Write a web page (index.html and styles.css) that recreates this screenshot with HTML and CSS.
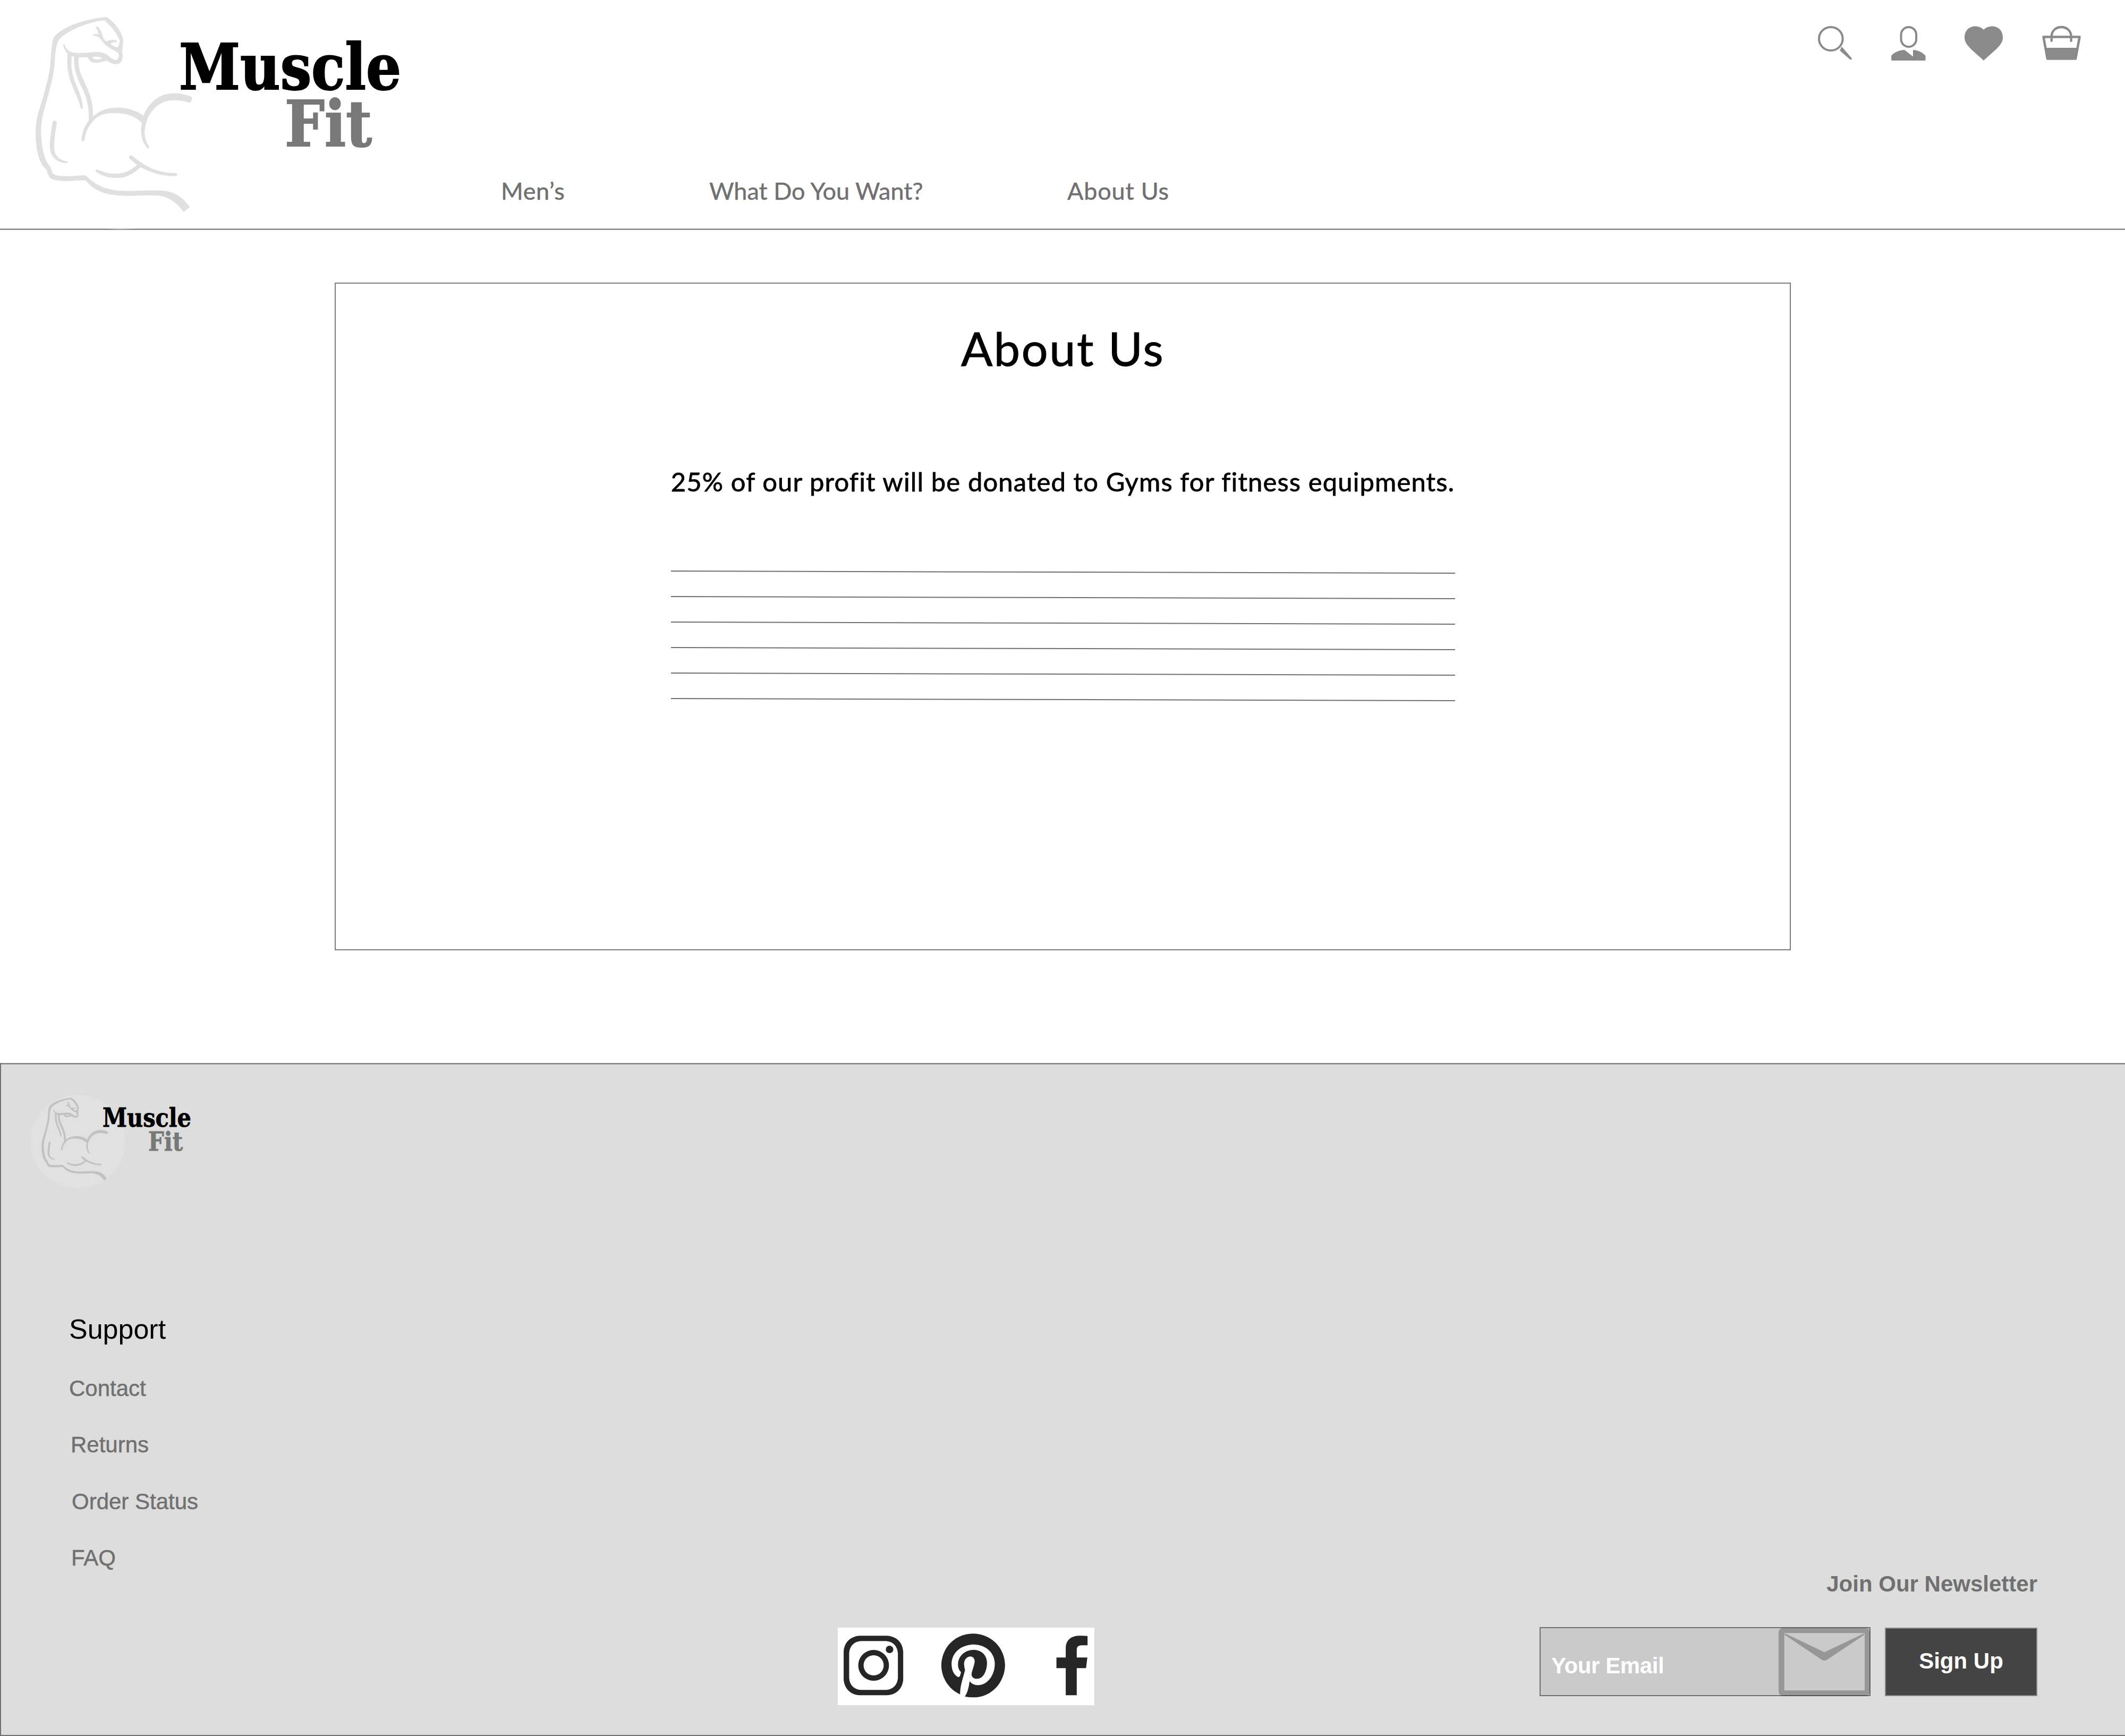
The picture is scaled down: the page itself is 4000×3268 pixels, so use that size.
FILE: index.html
```html
<!DOCTYPE html>
<html lang="en">
<head>
<meta charset="utf-8">
<title>Muscle Fit – About Us</title>
<link rel="stylesheet" href="styles.css">
</head>
<body>
<svg class="sprite" aria-hidden="true">
  <symbol id="arm" viewBox="0 0 1020 1170" overflow="visible">
    <!-- outer forearm, elbow and underside -->
    <path d="M445 36 C360 45 250 72 180 125 Q152 144 148 168 C136 225 138 290 130 335 C115 430 75 540 58 610 C48 670 48 740 62 800 C72 850 92 880 114 902 Q120 925 130 942 C150 962 200 962 240 962 C275 962 305 956 335 960 C385 1018 440 1046 580 1046 C640 1046 690 1040 750 1045 C820 1060 850 1090 887 1137 L922 1110 C880 1050 830 1020 770 1017 C700 1010 640 1020 560 1018 C470 1018 400 995 343 938 Q335 929 322 930 C280 932 250 937 200 934 C160 932 145 924 141 900 Q138 882 126 872 C100 838 86 780 82 690 C80 640 90 590 108 530 C130 450 150 380 158 310 C162 250 162 210 180 170 C205 130 320 68 440 55 C480 90 510 130 526 168 Q524 195 514 208 C490 202 470 190 478 183 Q495 176 508 178 Q514 172 508 168 C480 163 465 167 450 174 C436 162 430 152 428 135 C420 115 412 98 400 89 Q392 88 391 95 Q402 110 406 134 Q390 130 377 133 Q370 137 377 141 C405 144 415 155 428 174 C450 205 490 222 515 237 C526 250 522 270 508 279 C490 280 475 265 455 250 C430 232 400 232 380 234 C340 238 290 244 250 233 C230 225 222 210 215 193 Q208 186 207 196 C212 216 220 232 231 243 C228 310 232 350 246 392 C265 450 295 495 305 550 Q311 560 318 550 C318 510 300 465 280 420 C258 370 248 310 255 257 L269 260 C265 320 280 370 310 430 C340 490 356 550 350 623 C328 650 312 690 310 732 Q318 744 327 733 C331 690 350 650 380 620 C420 575 480 575 545 582 C590 588 620 606 652 634 C642 680 644 730 680 774 Q689 783 694 770 C664 730 658 680 680 617 C710 550 760 500 850 507 Q890 508 920 521 Q934 514 935 492 Q930 484 922 483 C840 453 765 464 715 512 C685 540 670 565 660 593 C610 557 550 545 500 548 C445 550 410 568 375 597 C378 520 352 455 325 400 C302 350 290 320 294 264 L346 263 C352 285 370 298 405 294 Q435 288 452 281 C470 295 500 310 525 298 C542 285 548 255 539 232 Q545 200 546 165 C540 120 500 70 460 41 Q452 35 445 36 Z M370 263 Q395 256 427 266 C410 280 380 280 370 263 Z"/>
    <!-- elbow crease -->
    <path d="M147 632 Q148 622 159 622 Q171 624 171 634 C160 700 150 770 160 800 C172 835 200 846 228 852 Q234 857 228 861 C190 862 155 845 139 808 C122 765 138 690 147 632 Z"/>
    <!-- armpit lines -->
    <path d="M579 832 Q577 818 592 818 Q599 820 603 824 C670 880 740 917 844 917 Q852 920 852 927 Q850 934 842 934 C770 936 710 918 644 884 C600 925 560 945 510 945 C460 945 420 932 391 909 Q387 900 396 896 C430 910 460 922 510 921 C560 918 590 900 625 871 Q595 850 579 832 Z"/>
  </symbol>
</svg>

<header class="header">
  <a class="logo" href="#">
    <svg width="800" height="433" viewBox="0 0 800 433" role="img" aria-label="Muscle Fit">
      <ellipse cx="228" cy="225" rx="211" ry="207" fill="#fff" fill-opacity=".3"/>
      <use href="#arm" x="50" y="20" width="340" height="390" fill="#e0e0e0"/>
      <text class="brand" x="337" y="168" font-size="120" stroke-width="2" textLength="418" lengthAdjust="spacingAndGlyphs">Muscle</text>
      <text class="brand brand-sub" x="536" y="275" font-size="120" stroke-width="2" textLength="164" lengthAdjust="spacingAndGlyphs">Fit</text>
    </svg>
  </a>
  <nav class="nav">
    <a class="nav-men" href="#">Men’s</a>
    <a class="nav-want" href="#">What Do You Want?</a>
    <a class="nav-about" href="#">About Us</a>
  </nav>
  <div class="tools">
    <svg width="64" height="66" viewBox="3422.5 49 64 66"><ellipse cx="3446.8" cy="73" rx="22.3" ry="22" fill="none" stroke="#8a8a8a" stroke-width="4"/><path d="M3467.3 87.7 L3463.8 95.3 L3483 112 Q3486 113.500 3486.400 110 Z"/></svg>
    <svg width="65" height="66" viewBox="3560.500 49 65 66"><rect x="3579" y="51" width="28.600" height="37" rx="14.300" fill="none" stroke="#8a8a8a" stroke-width="4"/><path d="M3585.500 94 C3575 94.500 3565 99 3560.600 105 V112.500 Q3560.600 114 3562 114 H3625 V105 C3619 98.500 3611 94.500 3601.500 94 V106.500 Z"/></svg>
    <svg width="72" height="66" viewBox="3698 49 72 66"><path d="M3734 56 C3744 45 3770 47 3770 71 C3770 86 3750 98 3734 114 C3718 98 3698 86 3698 71 C3698 47 3724 45 3734 56 Z"/></svg>
    <svg width="73" height="66" viewBox="3844 49 73 66"><path d="M3846.500 69.500 H3914.500 L3907 110.500 H3854 Z" fill="none" stroke="#8a8a8a" stroke-width="4.500" stroke-linejoin="round"/><path d="M3849 90 H3911 L3907.500 111 H3853 Z"/><path d="M3861.700 77 V69 C3861.700 45 3898.600 45 3898.600 69 V77" fill="none" stroke="#8a8a8a" stroke-width="4.300" stroke-linecap="round"/></svg>
  </div>
</header>

<main class="main">
  <section class="card">
    <h1>About Us</h1>
    <p>25% of our profit will be donated to Gyms for fitness equipments.</p>
    <svg class="rules" width="1476" height="248" viewBox="0 0 1476 248" stroke="#707070" stroke-width="2">
      <path d="M0 2 L1476 6 M0 50 L1476 54 M0 98 L1476 102 M0 146 L1476 150 M0 194 L1476 198 M0 242 L1476 246"/>
    </svg>
  </section>
</main>

<footer class="footer">
  <div class="support">
    <svg class="support-logo" width="320" height="176" viewBox="0 0 320 176" role="img" aria-label="Muscle Fit">
      <ellipse cx="89.500" cy="88" rx="89.500" ry="88" fill="#e1e1e1"/>
      <use href="#arm" x="14" y="0.500" width="144" height="165.200" fill="#c1c1c1"/>
      <text class="brand" x="136" y="60" font-size="49" stroke-width=".8" textLength="167" lengthAdjust="spacingAndGlyphs">Muscle</text>
      <text class="brand brand-sub" x="222" y="104.700" font-size="49" stroke-width=".8" textLength="65" lengthAdjust="spacingAndGlyphs">Fit</text>
    </svg>
    <h2>Support</h2>
    <ul>
      <li>Contact</li>
      <li class="in-3">Returns</li>
      <li class="in-5">Order Status</li>
      <li class="in-4">FAQ</li>
    </ul>
  </div>
  <svg class="social" viewBox="104 101 1353 438" preserveAspectRatio="none">
    <rect x="104" y="101" width="1353" height="438" fill="#fff"/>
    <g fill="#262626" fill-rule="evenodd">
      <path d="M220 147 H362 C415 150 445 185 449 235 V395 C445 445 415 480 362 483 H220 C170 480 139 445 135 395 V235 C139 185 170 150 220 147 Z M226 177 C190 180 166 205 164 245 V385 C166 425 190 450 226 453 H358 C395 450 418 425 421 385 V245 C418 205 395 180 358 177 Z"/>
      <path d="M293 227 A81 87 0 1 1 292.900 227 Z M293 257 A53 57 0 1 0 293.100 257 Z"/>
      <ellipse cx="377" cy="224" rx="20" ry="21"/>
      <path d="M749 478 C690 450 650 385 650 312 C652 215 722 135 817 135 C912 135 985 215 986 312 C985 410 915 495 822 495 Q795 495 774 490 C790 465 795 435 799 404 C812 420 828 426 845 426 C895 424 932 370 932 303 C930 238 880 196 820 196 C750 198 704 245 704 308 C705 345 718 370 740 381 Q748 380 749 372 L754 352 C742 340 737 325 738 306 C740 260 775 226 822 226 C865 228 891 260 891 300 C890 350 870 390 838 390 C818 390 807 378 810 358 C815 335 825 310 826 290 C825 273 815 264 802 264 C782 266 769 285 770 310 Q771 325 775 340 C765 385 748 430 749 478 Z"/>
      <path d="M1306 483 V330 H1257 V270 H1306 V215 C1308 170 1335 147 1380 147 Q1400 146 1421 148 V201 H1388 C1370 202 1364 210 1364 228 V270 H1420 L1413 330 H1364 V483 Z"/>
    </g>
  </svg>
  <form class="newsletter">
    <label for="email">Join Our Newsletter</label>
    <div class="fields">
      <div class="email">
        <input id="email" type="email" placeholder="Your Email">
        <svg class="envelope" width="172" height="129" viewBox="24 42 516 387"><path fill-rule="evenodd" d="M52 42 H512 Q540 44 540 72 V399 Q540 427 512 429 H52 Q24 427 24 399 V72 Q24 44 52 42 Z M56 73 V397 H510 V73 Z M62 76 L283 181 L504 76 Q510 78 507 83 L300 222 Q283 234 265 222 L59 83 Q56 77 62 76 Z"/></svg>
      </div>
      <button type="button">Sign Up</button>
    </div>
  </form>
</footer>
</body>
</html>
```
FILE: styles.css
```css
* { box-sizing: border-box; }

body {
  margin: 0;
  width: 4000px;
  height: 3268px;
  display: flex;
  flex-direction: column;
  background: #fff;
  color: #000;
  font-family: "Liberation Sans", Arial, sans-serif;
}

a { color: inherit; text-decoration: none; }
svg { display: block; flex: none; overflow: visible; }
.sprite { display: none; }

.brand {
  font-family: "DejaVu Serif Condensed", "DejaVu Serif", serif;
  font-weight: 700;
  font-stretch: condensed;
  fill: #000;
  stroke: #000;
}
.brand-sub { fill: #787878; stroke: #787878; }

.header {
  height: 433px;
  flex: none;
  display: flex;
  background: linear-gradient(#b7b7b7 0 1px, #707070 1px 2px, #a5a5a5 2px 3px) bottom / 100% 3px no-repeat;
}
.logo { width: 800px; }
.nav {
  display: flex;
  flex: 1;
  align-self: flex-end;
  margin-bottom: 48px;
  padding-left: 143px;
  font: 45px/52px Lato, "Open Sans", sans-serif;
  color: #707070;
  -webkit-text-stroke: .5px #707070;
  white-space: nowrap;
}
.nav a { flex: none; }
.nav-men { width: 392px; letter-spacing: .6px; }
.nav-want { width: 674px; }
.nav-about { letter-spacing: .8px; }
.tools {
  display: flex;
  gap: 73.600px;
  padding: 49px 83px 0 0;
  fill: #8a8a8a;
}

.main { flex: 1; padding: 99px 629px 0 630px; }
.card {
  height: 1257px;
  border: 2px solid #7c7c7c;
  display: flex;
  flex-direction: column;
  align-items: center;
  padding-top: 71px;
  font-family: Lato, "Open Sans", sans-serif;
}
.card h1 { margin: 0; font-size: 88px; line-height: 100px; font-weight: 400; letter-spacing: 2.6px; white-space: nowrap; -webkit-text-stroke: 1px #000; }
.card p { margin: 173px 0 0; font-size: 49px; line-height: 56px; letter-spacing: 1.1px; white-space: nowrap; -webkit-text-stroke: .8px #000; }
.rules { margin-top: 139px; }

.footer {
  height: 1267px;
  flex: none;
  display: flex;
  align-items: flex-start;
  border: solid #707070;
  border-width: 0 0 2px 2px;
  background: linear-gradient(#999 0 1px, #707070 1px 2px, #a9a9a9 2px 3px) top / 100% 3px no-repeat #ddd;
}
.support { width: 1575px; padding: 60px 0 0 55px; }
.support h2 { margin: 235px 0 0 73px; font-size: 52px; line-height: 60px; font-weight: 400; }
.support ul { margin: 29px 0 0 73px; padding: 0; list-style: none; font-size: 42px; line-height: 106.300px; color: #707070; -webkit-text-stroke: .5px #707070; }
.in-3 { padding-left: 3px; }
.in-4 { padding-left: 4px; }
.in-5 { padding-left: 5px; }

.social { width: 483px; height: 146px; margin-top: 1063px; }

.newsletter { margin: 957px 0 0 838px; width: 937px; }
.newsletter label { display: block; text-align: right; font-size: 42px; line-height: 48px; font-weight: 700; color: #707070; }
.fields { display: flex; gap: 27px; margin-top: 57px; align-items: flex-end; }
.email { position: relative; width: 623px; height: 130px; }
.email input {
  width: 100%;
  height: 100%;
  border: 2px solid #707070;
  border-radius: 0;
  background: #cacaca;
  padding: 15px 0 0 20px;
  font: 700 42px "Liberation Sans", Arial, sans-serif;
  letter-spacing: -.4px;
}
.email input::placeholder { color: #fff; opacity: 1; }
.envelope { position: absolute; right: 1px; bottom: 0; fill: rgba(0, 0, 0, .25); }
.fields button {
  width: 287px;
  height: 129px;
  border: 2px solid #888;
  border-radius: 0;
  background: #444;
  color: #fff;
  padding: 0 0 4px;
  font: 700 42px "Liberation Sans", Arial, sans-serif;
}
```
